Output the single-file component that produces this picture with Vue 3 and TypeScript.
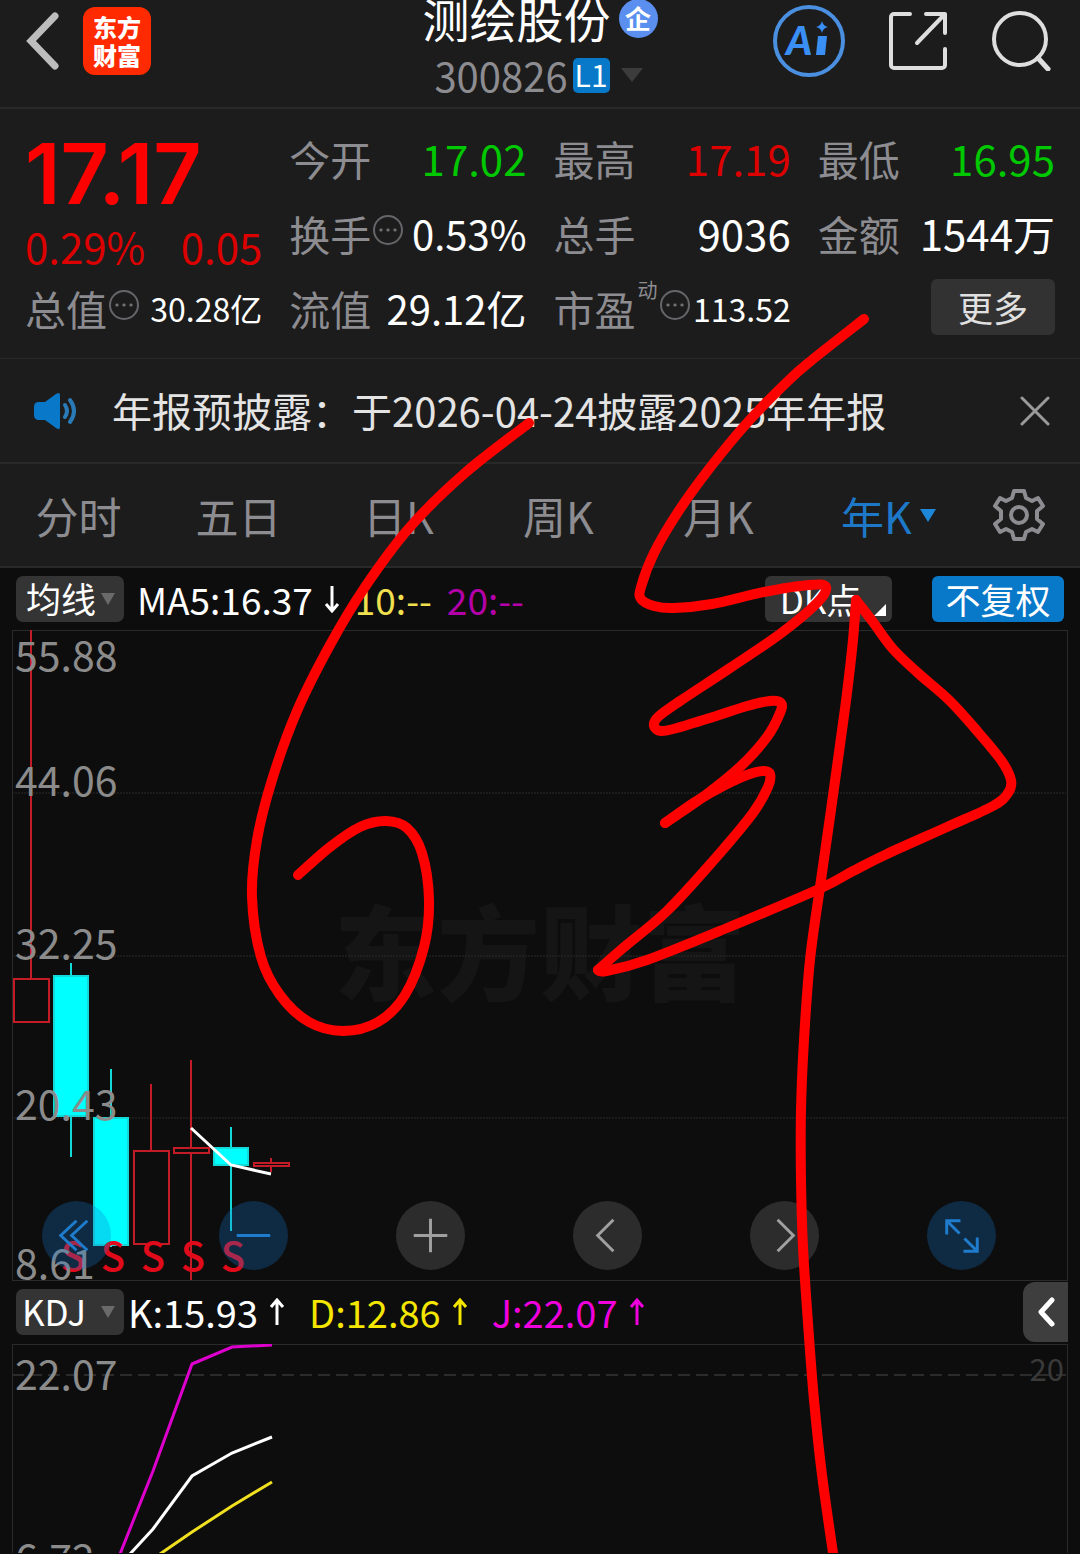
<script setup lang="ts">
import { ref } from 'vue'

type Point = [number, number]

interface Candle {
  x: number
  high: number
  low: number
  top: number
  bottom: number
  rising: boolean
}

const tabs = ['分时', '五日', '日K', '周K', '月K', '年K']
const activeTab = ref('年K')
const overlay = ref('均线')
const indicator = ref('KDJ')
const noticeOpen = ref(true)

const priceLabels = [
  { text: '55.88', y: 41 },
  { text: '44.06', y: 166 },
  { text: '32.25', y: 329 },
  { text: '20.43', y: 490 },
  { text: '8.61', y: 649 },
]
const gridLines = [163, 326, 488]

const candles: Candle[] = [
  { x: 19, high: 0, low: 392, top: 349, bottom: 392, rising: true },
  { x: 59, high: 333, low: 527, top: 346, bottom: 486, rising: false },
  { x: 99, high: 439, low: 617, top: 488, bottom: 615, rising: false },
  { x: 139, high: 454, low: 614, top: 521, bottom: 614, rising: true },
  { x: 179, high: 430, low: 650, top: 518, bottom: 523, rising: true },
  { x: 219, high: 497, low: 601, top: 518, bottom: 535, rising: false },
  { x: 259, high: 528, low: 542, top: 533, bottom: 536, rising: true },
]
const sellMarks = [61, 101, 141, 181, 221]

// Freehand marker strokes, broken where the pen turns sharply.
const strokes: Point[][] = [
  [[529, 423], [465, 473], [410, 527], [365, 587], [330, 645], [297, 711], [272, 780], [257, 840], [252, 897], [261, 957], [280, 995], [309, 1022], [343, 1031], [378, 1022], [405, 995], [424, 947], [429, 900], [422, 853], [407, 828], [386, 821], [360, 827], [330, 847], [298, 875]],
  [[864, 319], [812, 360], [788, 381], [747, 423], [709, 469], [678, 512], [654, 553], [641, 587], [641, 599], [654, 606], [674, 608], [712, 604], [764, 592], [809, 585], [826, 587], [817, 603], [780, 634], [730, 668], [680, 701], [658, 717], [654, 726], [661, 731], [677, 728], [713, 717], [747, 706], [770, 701], [781, 703], [780, 713], [767, 737], [740, 767], [703, 797], [665, 823]],
  [[665, 823], [695, 802], [723, 786], [747, 775], [763, 771], [770, 774], [768, 787], [753, 813], [713, 861], [667, 911], [623, 948], [598, 970]],
  [[598, 970], [606, 971], [647, 960], [727, 928], [819, 889], [853, 871], [887, 854], [947, 827], [993, 806], [1008, 793], [1011, 780], [1001, 760], [978, 732], [950, 701], [918, 673], [893, 649], [873, 622], [856, 600]],
  [[856, 600], [853, 640], [847, 693], [840, 745], [831, 810], [820, 887], [810, 960], [804, 1040], [801, 1110], [801, 1180], [803, 1247], [808, 1323], [814, 1400], [822, 1475], [834, 1560]],
]

function smooth(points: Point[]): string {
  let d = `M${points[0][0]} ${points[0][1]}`
  for (let i = 0; i < points.length - 1; i++) {
    const a = points[Math.max(i - 1, 0)]
    const b = points[i]
    const c = points[i + 1]
    const e = points[Math.min(i + 2, points.length - 1)]
    d += ` C${b[0] + (c[0] - a[0]) / 6} ${b[1] + (c[1] - a[1]) / 6} ${c[0] - (e[0] - b[0]) / 6} ${c[1] - (e[1] - b[1]) / 6} ${c[0]} ${c[1]}`
  }
  return d
}
</script>

<template>
  <div class="app">
    <header class="header">
      <div class="side">
        <button class="plain" aria-label="返回">
          <svg width="34" height="58" viewBox="0 0 34 58"><path d="M29 4 5 29 29 54" fill="none" stroke="#bdbdbd" stroke-width="7" stroke-linecap="round" /></svg>
        </button>
        <a class="logo" href="#"><span>东方</span><span>财富</span></a>
      </div>
      <div class="stock">
        <h1 class="name">测绘股份<span class="firm">企</span></h1>
        <button class="plain code">300826<span class="level">L1</span><i class="caret caret-code"></i></button>
      </div>
      <div class="side side-right">
        <button class="plain" aria-label="Ai">
          <svg width="72" height="72" viewBox="0 0 72 72">
            <circle cx="36" cy="36" r="34" fill="none" stroke="#4a8fe0" stroke-width="4" />
            <text x="13" y="50" class="ai">A</text>
            <path d="M45 31h9l-2 19h-9z" fill="#3a8ff5" />
            <path d="M49 16q1 5 6 6-5 1-6 6-1-5-6-6 5-1 6-6z" fill="#3a8ff5" />
          </svg>
        </button>
        <button class="plain" aria-label="分享">
          <svg width="58" height="58" viewBox="0 0 58 58"><path d="M21 2H5a3 3 0 0 0-3 3v48a3 3 0 0 0 3 3h48a3 3 0 0 0 3-3V37M37 2h19v19M55 3 28 31" fill="none" stroke="#dedede" stroke-width="4" stroke-linecap="round" stroke-linejoin="round" /></svg>
        </button>
        <button class="plain" aria-label="搜索">
          <svg width="60" height="60" viewBox="0 0 60 60"><circle cx="29" cy="28" r="26" fill="none" stroke="#dedede" stroke-width="4" /><path d="m47 47 10 11" stroke="#dedede" stroke-width="5" stroke-linecap="round" /></svg>
        </button>
      </div>
    </header>

    <section class="quote">
      <div class="price">
        <strong>17.17</strong>
        <p><span>0.29%</span><span>0.05</span></p>
      </div>
      <div class="item"><span class="label">今开</span><b class="down">17.02</b></div>
      <div class="item"><span class="label">最高</span><b class="up">17.19</b></div>
      <div class="item"><span class="label">最低</span><b class="down">16.95</b></div>
      <div class="item"><span class="label">换手</span><i class="dots"></i><b class="mid">0.53%</b></div>
      <div class="item"><span class="label">总手</span><b>9036</b></div>
      <div class="item"><span class="label">金额</span><b>1544万</b></div>
      <div class="item"><span class="label">总值</span><i class="dots"></i><b class="small">30.28亿</b></div>
      <div class="item"><span class="label">流值</span><b class="mid">29.12亿</b></div>
      <div class="item"><span class="label">市盈</span><sup>动</sup><i class="dots"></i><b class="small">113.52</b></div>
      <div class="item"><button class="more">更多</button></div>
    </section>

    <section v-if="noticeOpen" class="notice">
      <svg width="46" height="38" viewBox="0 0 46 38">
        <path d="M1 15q0-5 5-5h6L23 2q4-3 4 2v30q0 5-4 2l-11-8H6q-5 0-5-5z" fill="#0a78c8" />
        <path d="M32 13q4 6 0 12M37 8q8 11 0 22" fill="none" stroke="#2a7ab8" stroke-width="4" stroke-linecap="round" />
      </svg>
      <a href="#">年报预披露：于2026-04-24披露2025年年报</a>
      <button class="plain" aria-label="关闭" @click="noticeOpen = false">
        <svg width="30" height="30" viewBox="0 0 30 30"><path d="m2 2 26 26M28 2 2 28" stroke="#9a9a9a" stroke-width="3" stroke-linecap="round" /></svg>
      </button>
    </section>

    <nav class="tabs">
      <button v-for="tab in tabs" :key="tab" class="plain tab" :class="{ active: tab === activeTab }" @click="activeTab = tab">
        {{ tab }}<i v-if="tab === '年K'" class="caret caret-tab"></i>
      </button>
      <button class="plain gear" aria-label="设置">
        <svg width="54" height="54" viewBox="-27 -27 54 54" fill="none" stroke="#8c8c91" stroke-width="4" stroke-linejoin="round">
          <path d="M-5-24H5L7-17 13-14 19-17 24-9 18-4V4L24 9 19 17 13 14 7 17 5 24H-5L-7 17-13 14-19 17-24 9-18 4V-4L-24-9-19-17-13-14-7-17Z" />
          <circle r="8" />
        </svg>
      </button>
    </nav>

    <main class="charts">
      <div class="bar bar-top">
        <div class="picker">
          <select v-model="overlay" aria-label="主图指标"><option>均线</option></select>
          <i class="caret caret-pick"></i>
        </div>
        <div class="values values-ma">
          <span>MA5:16.37<svg width="16" height="28" viewBox="0 0 16 28"><path d="M8 1v24M2 19l6 7 6-7" /></svg></span>
          <span class="soft-yellow">10:--</span>
          <span class="soft-magenta">20:--</span>
        </div>
        <button class="chip chip-dk">DK点<i class="corner"></i></button>
        <button class="chip chip-blue">不复权</button>
      </div>

      <div class="plot">
        <span class="watermark">东方财富</span>
        <svg class="canvas" width="100%" height="650">
          <line v-for="y in gridLines" :key="y" x1="0" x2="100%" :y1="y" :y2="y" stroke="#2b2b2b" stroke-dasharray="2 1" />
          <g v-for="c in candles" :key="c.x" :stroke="c.rising ? '#c41c26' : '#12d8d8'" :fill="c.rising ? 'none' : '#00ffff'" stroke-width="2">
            <line :x1="c.x" :x2="c.x" :y1="c.high" :y2="c.top" />
            <line :x1="c.x" :x2="c.x" :y1="c.bottom" :y2="c.low" />
            <rect :x="c.x - 17" :y="c.top" :width="c.rising ? 35 : 34" :height="c.bottom - c.top" />
          </g>
          <polyline points="179,498 219,535 259,544" fill="none" stroke="#fff" stroke-width="3" />
          <text v-for="x in sellMarks" :key="x" class="sell" :x="x" y="641">S</text>
          <text v-for="l in priceLabels" :key="l.text" class="axis" x="3" :y="l.y">{{ l.text }}</text>
        </svg>
        <div class="tools">
          <button class="tool blue" aria-label="最早"><svg viewBox="0 0 70 70"><path d="M35 20 19 35l16 15M46 20 30 35l16 15" /></svg></button>
          <button class="tool blue" aria-label="缩小"><svg viewBox="0 0 70 70"><path d="M18 35h34" /></svg></button>
          <button class="tool" aria-label="放大"><svg viewBox="0 0 70 70"><path d="M18 35h34M35 18v34" /></svg></button>
          <button class="tool" aria-label="向左"><svg viewBox="0 0 70 70"><path d="M41 19 25 35l16 16" /></svg></button>
          <button class="tool" aria-label="向右"><svg viewBox="0 0 70 70"><path d="M28 19 44 35 28 51" /></svg></button>
          <button class="tool blue" aria-label="全屏"><svg viewBox="0 0 70 70"><path d="M20 34V20h14M20 20l13 13M51 37v14H37M51 51 38 38" /></svg></button>
        </div>
      </div>

      <div class="bar bar-kdj">
        <div class="picker">
          <select v-model="indicator" aria-label="副图指标"><option>KDJ</option></select>
          <i class="caret caret-pick"></i>
        </div>
        <div class="values values-kdj">
          <span>K:15.93<svg width="16" height="28" viewBox="0 0 16 28"><path d="M8 27V3M2 9l6-7 6 7" /></svg></span>
          <span class="yellow">D:12.86<svg width="16" height="28" viewBox="0 0 16 28"><path d="M8 27V3M2 9l6-7 6 7" /></svg></span>
          <span class="magenta">J:22.07<svg width="16" height="28" viewBox="0 0 16 28"><path d="M8 27V3M2 9l6-7 6 7" /></svg></span>
        </div>
        <button class="fold" aria-label="展开">
          <svg width="18" height="30" viewBox="0 0 18 30"><path d="M15 3 4 15l11 12" fill="none" stroke="#fff" stroke-width="5" stroke-linecap="round" stroke-linejoin="round" /></svg>
        </button>
      </div>

      <div class="plot">
        <svg class="canvas" width="100%" height="209">
          <line x1="0" x2="100%" y1="31" y2="31" stroke="#2b2b2b" stroke-width="2" stroke-dasharray="12 6" />
          <g fill="none" stroke-width="3">
            <polyline points="108,210 141,127 180,20 220,3 260,1" stroke="#dd00cc" />
            <polyline points="118,210 141,185 180,132 220,109 260,93" stroke="#fff" />
            <polyline points="148,210 180,188 220,162 260,138" stroke="#f0e020" />
          </g>
          <text class="axis" x="3" y="46">22.07</text>
          <text class="axis" x="3" y="230">6.72</text>
          <text class="level-mark" x="100%" dx="-2" y="37">20</text>
        </svg>
      </div>
    </main>

    <svg class="marker" viewBox="0 0 1080 1554" aria-hidden="true">
      <path v-for="(s, i) in strokes" :key="i" :d="smooth(s)" />
    </svg>
  </div>
</template>

<style>
body {
  background: #0d0d0d;
}
</style>

<style scoped>
* {
  box-sizing: border-box;
}
.app {
  position: relative;
  overflow: hidden;
  color: #fff;
  font-family: "Noto Sans CJK SC", sans-serif;
  background: #0d0d0d;
}
button,
select {
  font-family: inherit;
  color: inherit;
  border: 0;
  margin: 0;
  padding: 0;
}
svg {
  display: block;
}
.plain {
  background: none;
}
.caret {
  display: block;
  border: solid transparent;
  border-bottom: 0;
}

.header {
  display: grid;
  grid-template-columns: 1fr auto 1fr;
  height: 109px;
  padding: 0 29px 0 26px;
  background: #1c1c1c;
  border-bottom: 2px solid #292929;
}
.side {
  display: flex;
  align-items: center;
  gap: 23px;
  height: 82px;
}
.side-right {
  justify-content: flex-end;
  gap: 44px;
}
.logo {
  display: flex;
  flex-direction: column;
  justify-content: center;
  width: 68px;
  height: 68px;
  border-radius: 12px;
  background: #ff2a00;
  color: #fff;
  font-size: 24px;
  font-weight: 900;
  line-height: 28px;
  text-align: center;
  text-decoration: none;
}
.stock {
  display: flex;
  flex-direction: column;
  align-items: center;
  gap: 20px;
}
.name {
  display: flex;
  align-items: center;
  gap: 8px;
  height: 36px;
  margin: 0;
  padding-left: 3px;
  font-size: 47px;
  font-weight: 400;
  line-height: 36px;
}
.firm {
  width: 39px;
  height: 39px;
  border-radius: 50%;
  background: #5a8ff0;
  font-size: 26px;
  font-weight: 700;
  line-height: 37px;
  text-align: center;
}
.code {
  display: flex;
  align-items: center;
  height: 38px;
  color: #8c8c91;
  font-size: 40px;
  line-height: 36px;
}
.level {
  width: 37px;
  height: 35px;
  margin-left: 5px;
  border-radius: 5px;
  background: #0878c8;
  color: #fff;
  font-size: 30px;
  line-height: 33px;
  text-align: center;
}
.caret-code {
  margin-left: 11px;
  border-width: 14px 11px 0;
  border-top-color: #3c3c3c;
}
.ai {
  fill: #3a8ff5;
  font: italic 900 40px Lato, sans-serif;
}

.quote {
  display: grid;
  grid-template-columns: repeat(4, 1fr);
  grid-auto-rows: 75px;
  column-gap: 27px;
  padding: 11px 25px 13px;
  background: #1c1c1c;
  border-bottom: 1px solid #292929;
}
.price {
  grid-row: span 2;
  color: #dc0000;
}
.price strong {
  display: block;
  height: 99px;
  color: #f00;
  font: 600 84px/108px Inter, sans-serif;
}
.price p {
  display: flex;
  justify-content: space-between;
  margin: 0;
  font-size: 42px;
  line-height: 54px;
}
.item {
  display: flex;
  align-items: center;
  white-space: nowrap;
}
.label {
  color: #8c8c91;
  font-size: 41px;
}
.item b {
  margin-left: auto;
  font-size: 42px;
  font-weight: 400;
}
.item b.mid {
  font-size: 40px;
}
.item b.small {
  font-size: 32px;
}
.item .up {
  color: #dc0000;
}
.item .down {
  color: #00c800;
}
.dots {
  flex: none;
  width: 30px;
  height: 30px;
  margin: 0 0 6px 2px;
  border: 2px solid #66666a;
  border-radius: 50%;
  background: radial-gradient(circle, #77777b 1px, transparent 2px) center / 7px 26px repeat-x;
  background-clip: content-box;
  padding: 0 3px;
}
.item sup {
  margin: 0 0 36px 2px;
  color: #8c8c91;
  font-size: 20px;
  line-height: 24px;
}
.more {
  width: 124px;
  height: 56px;
  margin: 0 0 2px auto;
  border-radius: 6px;
  background: #323232;
  color: #e0e0e0;
  font-size: 35px;
  line-height: 52px;
}

.notice {
  display: flex;
  align-items: center;
  height: 105px;
  padding: 0 30px 0 33px;
  background: #1c1c1c;
  border-bottom: 2px solid #292929;
}
.notice a {
  flex: 1;
  margin-left: 33px;
  padding-bottom: 2px;
  color: #e4e4e4;
  font-size: 40px;
  line-height: 60px;
  text-decoration: none;
}

.tabs {
  display: grid;
  grid-template-columns: repeat(5, 160fr) 180fr 100fr;
  height: 104px;
  background: #1c1c1c;
  border-bottom: 2px solid #292929;
}
.tab {
  display: flex;
  align-items: center;
  justify-content: center;
  padding-right: 3px;
  color: #8c8c91;
  font-size: 43px;
}
.active {
  color: #1e78c8;
}
.caret-tab {
  margin-left: 8px;
  border-width: 13px 8px 0;
  border-top-color: #1e88d8;
}
.gear {
  justify-self: start;
  margin-left: 12px;
}

.charts {
  padding: 0 12px;
}
.bar {
  display: flex;
  align-items: center;
  padding-left: 4px;
}
.bar-top {
  height: 62px;
  padding-right: 4px;
}
.bar-kdj {
  height: 64px;
}
.picker {
  position: relative;
  flex: none;
  width: 108px;
  height: 46px;
}
.picker select {
  appearance: none;
  width: 100%;
  height: 100%;
  padding: 0 0 2px 10px;
  border-radius: 7px;
  background: #343434;
  color: #fff;
  font-size: 35px;
  line-height: 44px;
}
.bar-kdj select {
  padding-left: 6px;
}
.caret-pick {
  position: absolute;
  top: 17px;
  right: 9px;
  border-width: 12px 7px 0;
  border-top-color: #6a6a6a;
  pointer-events: none;
}
.values {
  display: flex;
  flex: 1;
  font-size: 37px;
  line-height: 54px;
  white-space: nowrap;
}
.values span {
  display: flex;
  align-items: center;
}
.values svg {
  margin-left: 11px;
  fill: none;
  stroke: currentColor;
  stroke-width: 3px;
}
.values-ma {
  gap: 15px;
  margin-left: 13px;
}
.values-kdj {
  gap: 24px;
  margin-left: 4px;
  font-size: 38px;
}
.soft-yellow {
  color: #f0e050;
}
.soft-magenta {
  color: #b400a8;
}
.yellow {
  color: #f5e600;
}
.magenta {
  color: #f000dc;
}
.chip {
  flex: none;
  height: 46px;
  border-radius: 6px;
  font-size: 35px;
  line-height: 44px;
}
.chip-dk {
  position: relative;
  width: 127px;
  padding-right: 16px;
  background: #343434;
}
.corner {
  position: absolute;
  right: 6px;
  bottom: 6px;
  border: solid transparent;
  border-width: 12px 0 0 12px;
  border-bottom: 12px solid #fff;
  border-top: 0;
}
.chip-blue {
  width: 132px;
  margin-left: 40px;
  background: #0878c8;
}

.plot {
  position: relative;
  border: 1px solid #2a2a2a;
  border-width: 1px 1px 0;
  box-shadow: 0 1px #2a2a2a;
}
.canvas {
  position: relative;
  margin: -1px 0 0 -1px;
}
.watermark {
  position: absolute;
  inset: 0;
  color: #151515;
  font-size: 103px;
  font-weight: 900;
  line-height: 636px;
  text-align: center;
}
.axis {
  fill: #8b8b8b;
  font-size: 41px;
}
.sell {
  fill: #e00a1a;
  font-size: 40px;
  font-weight: 500;
  text-anchor: middle;
}
.level-mark {
  fill: #3a3a3a;
  font-size: 31px;
  text-anchor: end;
}
.tools {
  position: absolute;
  right: 71px;
  bottom: 10px;
  left: 29px;
  display: flex;
  justify-content: space-between;
}
.tool {
  width: 69px;
  height: 69px;
  border-radius: 50%;
  background: rgba(255, 255, 255, 0.13);
}
.tool svg {
  fill: none;
  stroke: #a0a0a0;
  stroke-width: 3px;
}
.tool.blue {
  background: rgba(20, 120, 210, 0.28);
}
.tool.blue svg {
  stroke: #1f7ccc;
}
.fold {
  display: flex;
  align-items: center;
  justify-content: center;
  width: 45px;
  height: 60px;
  border-radius: 12px 0 0 12px;
  background: #3e3e3e;
}
.marker {
  position: absolute;
  top: 0;
  left: 0;
  width: 100%;
  fill: none;
  stroke: #f00;
  stroke-width: 10px;
  stroke-linecap: round;
  stroke-linejoin: round;
  pointer-events: none;
}
</style>
